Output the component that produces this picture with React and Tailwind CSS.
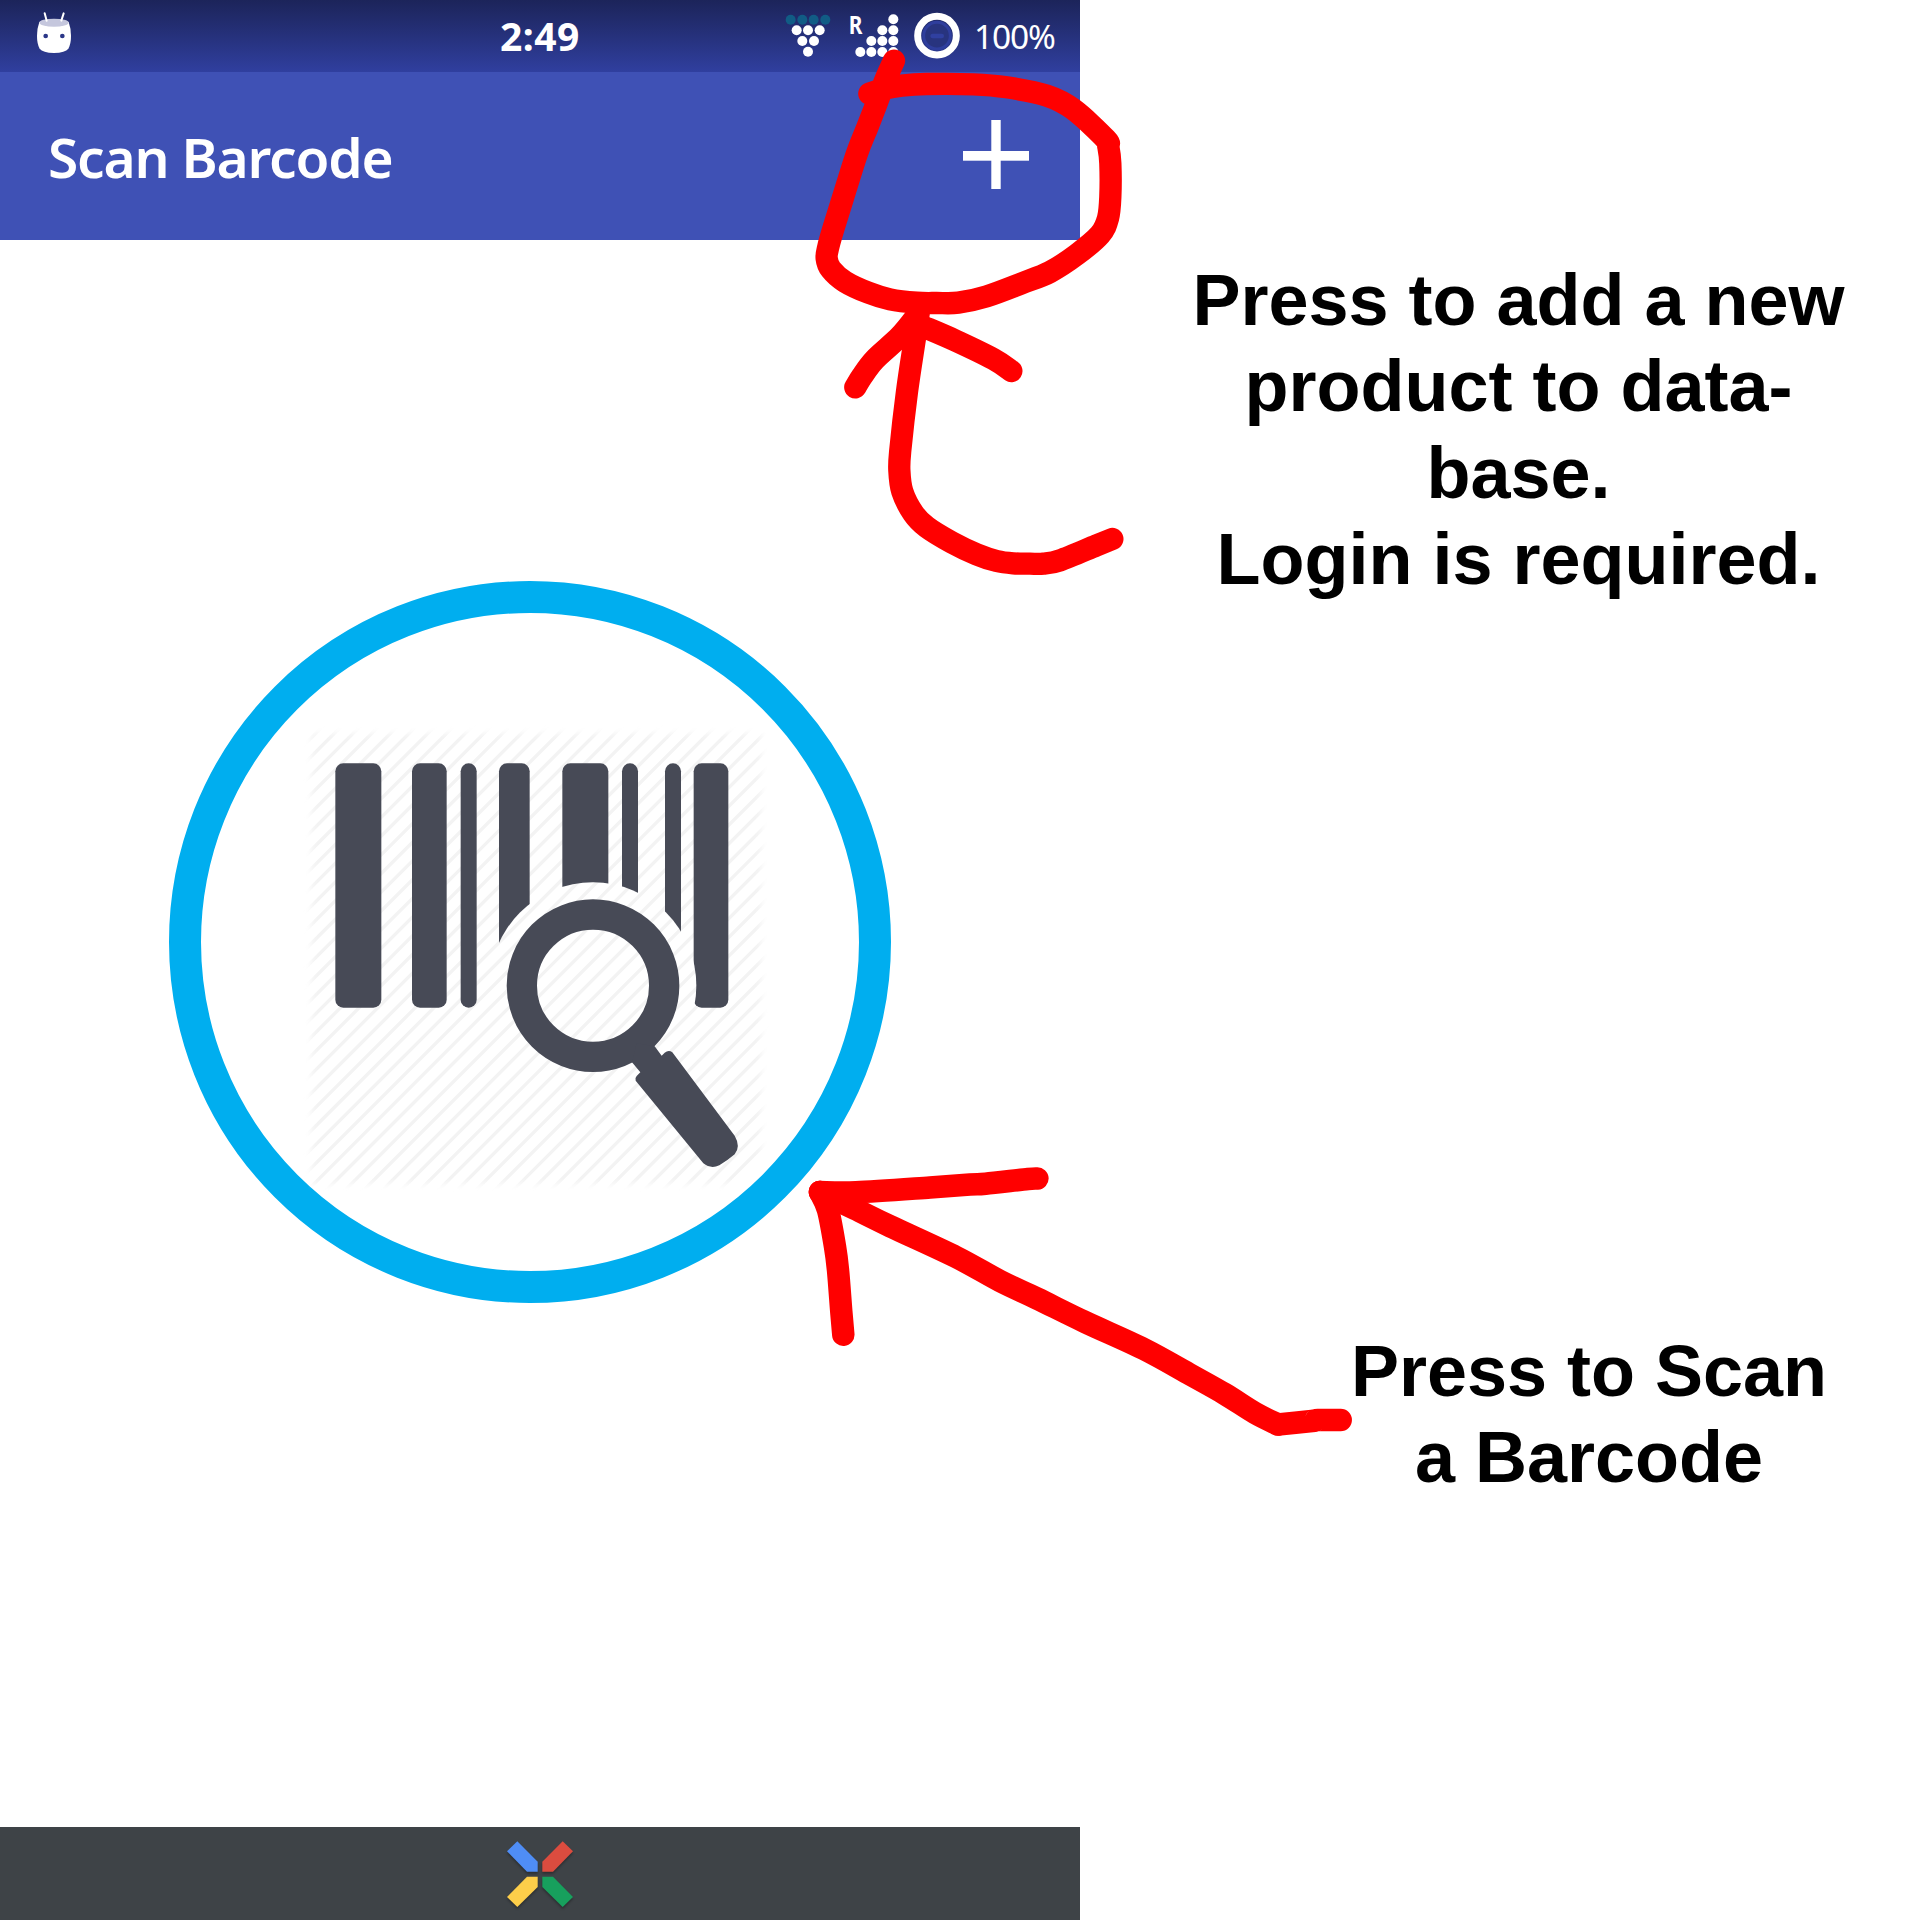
import React from "react";

const INK = "#474a56";

// Catmull-Rom spline through a list of [x, y] points.
function smooth(points) {
  let d = `M${points[0][0]} ${points[0][1]}`;
  for (let i = 0; i < points.length - 1; i++) {
    const p0 = points[i - 1] || points[i];
    const p1 = points[i];
    const p2 = points[i + 1];
    const p3 = points[i + 2] || p2;
    d += `C${p1[0] + (p2[0] - p0[0]) / 6} ${p1[1] + (p2[1] - p0[1]) / 6} ${p2[0] - (p3[0] - p1[0]) / 6} ${p2[1] - (p3[1] - p1[1]) / 6} ${p2[0]} ${p2[1]}`;
  }
  return d;
}

function RobotIcon() {
  return (
    <svg className="h-[72px] w-[120px] shrink-0" viewBox="0 0 360 216">
      <path d="M118 66Q162 50 206 66Q213 85 213 108Q213 132 205 146Q196 158 162 159Q128 158 119 146Q111 132 111 108Q111 85 118 66Z" fill="#fff" />
      <ellipse cx="162" cy="68" rx="44" ry="12" fill="#c5c7dd" />
      <path d="M134 40L140 62M191 40L184 62" stroke="#fff" strokeWidth="6" strokeLinecap="round" />
      <circle cx="137" cy="108" r="7" fill="#2b3788" />
      <circle cx="187" cy="108" r="7" fill="#2b3788" />
    </svg>
  );
}

const Dots = ({ points, fill }) => points.map(([x, y]) => <circle key={`${x}-${y}`} cx={x} cy={y} r="15" fill={fill} />);

function WifiIcon() {
  return (
    <svg className="h-[72px] w-[55px] shrink-0" viewBox="60 0 165 216">
      <Dots fill="#115c85" points={[[92, 59], [127, 59], [161, 59], [196, 59]]} />
      <Dots fill="#fff" points={[[110, 91], [144, 91], [179, 91], [127, 123], [162, 123], [144, 155]]} />
    </svg>
  );
}

function SignalIcon() {
  return (
    <svg className="ml-[10px] h-[72px] w-[55px] shrink-0" viewBox="255 0 165 216">
      <text x="266" y="101" fontSize="76" fontWeight="700" fill="#fff" textLength="41" lengthAdjust="spacingAndGlyphs" className="font-['Noto_Sans',sans-serif]">R</text>
      <Dots fill="#fff" points={[[400, 58], [367, 91], [400, 91], [334, 123], [367, 123], [400, 123], [301, 156], [334, 156], [367, 156], [400, 156]]} />
    </svg>
  );
}

function BatteryIcon() {
  return (
    <svg className="ml-[10px] h-[72px] w-[55px] shrink-0" viewBox="450 0 165 216">
      <circle cx="531" cy="107" r="58" fill="none" stroke="#fff" strokeWidth="21" />
      <circle cx="531" cy="107" r="40" fill="#28347f" stroke="#2f3e9d" strokeWidth="9" />
      <rect x="511" y="101" width="41" height="14" rx="7" fill="#3040a0" />
    </svg>
  );
}

const BARS = [
  [136, 138, 24], [366, 104, 24], [512, 48, 24], [627, 92, 24],
  [817, 138, 24], [996, 48, 24], [1125, 48, 24], [1211, 104, 24],
];

function BarcodeSearchIcon() {
  const lines = Array.from({ length: 47 }, (_, i) => 147 + i * 56.1);
  return (
    <svg className="size-[500px] shrink-0" viewBox="0 0 1500 1500">
      <defs>
        <filter id="soft" x="-10%" y="-10%" width="120%" height="120%">
          <feGaussianBlur stdDeviation="9" />
        </filter>
        <mask id="fade" maskUnits="userSpaceOnUse" x="0" y="0" width="1500" height="1500">
          <rect x="64" y="70" width="1350" height="1352" fill="#fff" filter="url(#soft)" />
        </mask>
        <mask id="lensGap" maskUnits="userSpaceOnUse" x="0" y="0" width="1500" height="1500">
          <rect width="1500" height="1500" fill="#fff" />
          <circle cx="909" cy="827" r="310" fill="#000" />
        </mask>
      </defs>
      <g mask="url(#fade)" stroke="#f3f3f3" strokeWidth="10">
        {lines.map((c) => <path key={c} d={`M0 ${c}L${c} 0`} />)}
      </g>
      <g mask="url(#lensGap)" fill={INK}>
        {BARS.map(([x, w, r]) => <rect key={x} x={x} y="160" width={w} height="733" rx={r} />)}
      </g>
      <circle cx="909" cy="827" r="213.5" fill="none" stroke={INK} strokeWidth="91" />
      <path d="M1094 1009L1115 1037L1124 1028Q1136 1018 1147 1027L1334 1277Q1353 1310 1334 1333Q1312 1352 1288 1366Q1262 1378 1240 1360L1037 1112Q1034 1104 1040 1098L1051 1087L1026 1057L1040 1000Z" fill={INK} />
    </svg>
  );
}

function NavLogo() {
  return (
    <svg className="size-[70px] drop-shadow-[0_2px_1px_rgba(0,0,0,0.3)]" viewBox="195 115 210 210">
      <path d="M232 122L293 183V213H261L201 152Z" fill="#4f8df5" />
      <path d="M368 122L307 183V213H339L399 152Z" fill="#db4c3f" />
      <path d="M232 319L293 259V228H261L201 289Z" fill="#fdce4a" />
      <path d="M368 319L307 259V228H339L399 289Z" fill="#17a05d" />
    </svg>
  );
}

const LOOP = [[402, 182], [376, 240], [350, 310], [322, 382], [291, 460], [250, 590], [222, 680], [205, 740], [200, 775], [213, 808], [255, 845], [325, 878], [390, 898], [470, 908], [530, 909], [595, 908], [680, 889], [785, 850], [870, 816], [950, 764], [1020, 704], [1044, 655], [1051, 590], [1051, 490], [1045, 440], [1037, 417], [940, 328], [860, 287], [740, 262], [640, 253], [500, 252], [425, 257], [370, 267], [328, 281]];
const CURVE = [[937, 777], [888, 797], [780, 841], [730, 851], [690, 851], [640, 850], [590, 843], [530, 823], [455, 787], [380, 741], [340, 700], [307, 635], [298, 570], [301, 510], [321, 335], [344, 180], [356, 100]];
const CURVE_LEFT = [[166, 322], [186, 289], [225, 238], [300, 169], [350, 108]];
const CURVE_RIGHT = [[634, 273], [580, 237], [465, 181], [370, 140]];
const SCAN_TAIL = [[1340.7, 1420], [1318, 1420], [1312, 1421], [1278, 1424.5], [1255, 1413], [1224.8, 1394], [1191, 1375], [1143.8, 1349], [1085, 1322], [1037, 1298.5], [1000, 1281], [956, 1257], [890.7, 1226.5], [855, 1209], [820, 1192]];
const SCAN_TOP = [[1037.4, 1178.5], [1028, 1179], [985.6, 1183.7], [970, 1184.5], [930, 1187.5], [856, 1192.3], [820, 1192]];
const SCAN_SIDE = [[843.3, 1334.7], [841.3, 1311.7], [838, 1270], [835, 1246.7], [828, 1210], [820, 1192]];

function Annotations() {
  return (
    <svg className="pointer-events-none absolute inset-0 size-[1920px]" viewBox="0 0 1920 1920" fill="none" stroke="#ff0000" strokeLinecap="round" strokeLinejoin="round">
      <g transform="translate(760 0) scale(0.33333)" strokeWidth="67">
        <path d={smooth(LOOP)} />
      </g>
      <g transform="translate(800 280) scale(0.33333)" strokeWidth="67">
        <path d={smooth(CURVE)} />
        <path d={smooth(CURVE_LEFT)} />
        <path d={smooth(CURVE_RIGHT)} />
      </g>
      <g strokeWidth="22.5">
        <path d={smooth(SCAN_TAIL.slice(0, 4))} />
        <path d={smooth(SCAN_TAIL.slice(3))} />
        <path d={smooth(SCAN_TOP)} />
        <path d={smooth(SCAN_SIDE)} />
      </g>
    </svg>
  );
}

export default function App() {
  return (
    <div className="relative flex h-[1920px] w-[1920px] overflow-hidden bg-white">
      <div className="flex w-[1080px] shrink-0 flex-col">
        <div className="flex h-[72px] items-center bg-linear-to-b from-[#1c245a] to-[#303f9f] font-['Noto_Sans',sans-serif] text-white">
          <RobotIcon />
          <div className="ml-[380px] w-[280px] whitespace-nowrap text-[39px] leading-[72px] font-bold tracking-[0.5px]">2:49</div>
          <WifiIcon />
          <SignalIcon />
          <BatteryIcon />
          <div className="ml-[9px] whitespace-nowrap text-[33.5px] leading-[72px] tracking-[-1.2px]">100%</div>
        </div>
        <header className="flex h-[168px] items-center justify-between bg-[#3f51b5] pr-[51px] pl-[48px]">
          <h1 className="mt-[2px] whitespace-nowrap font-['Noto_Sans',sans-serif] text-[55px] leading-[72px] font-semibold tracking-[-1.2px] text-white">Scan Barcode</h1>
          <button className="mb-[3px]" aria-label="Add product">
            <svg className="h-[69px] w-[66px]" viewBox="0 0 66 69" fill="#fff">
              <rect x="28.3" width="9.4" height="69" />
              <rect y="31" width="66" height="9.7" />
            </svg>
          </button>
        </header>
        <main className="flex flex-1 flex-col items-start pt-[340.5px] pl-[169px]">
          <button className="flex size-[722px] items-center justify-center rounded-full border-[32px] border-[#00aeef] pl-[20px]" aria-label="Scan">
            <div className="mt-[36px]">
              <BarcodeSearchIcon />
            </div>
          </button>
        </main>
        <nav className="flex h-[93px] items-center justify-center bg-[#3e4347]">
          <NavLogo />
        </nav>
      </div>
      <div className="flex flex-1 flex-col pt-[257px] text-center font-['Liberation_Sans',Arial,sans-serif] text-[72px] leading-[86.3px] font-bold text-black">
        <p className="pl-[37px]">
          Press to add a new<br />product to data-<br />base.<br />Login is required.
        </p>
        <p className="mt-[726px] pl-[178px]">
          Press to Scan<br />a Barcode
        </p>
      </div>
      <Annotations />
    </div>
  );
}
